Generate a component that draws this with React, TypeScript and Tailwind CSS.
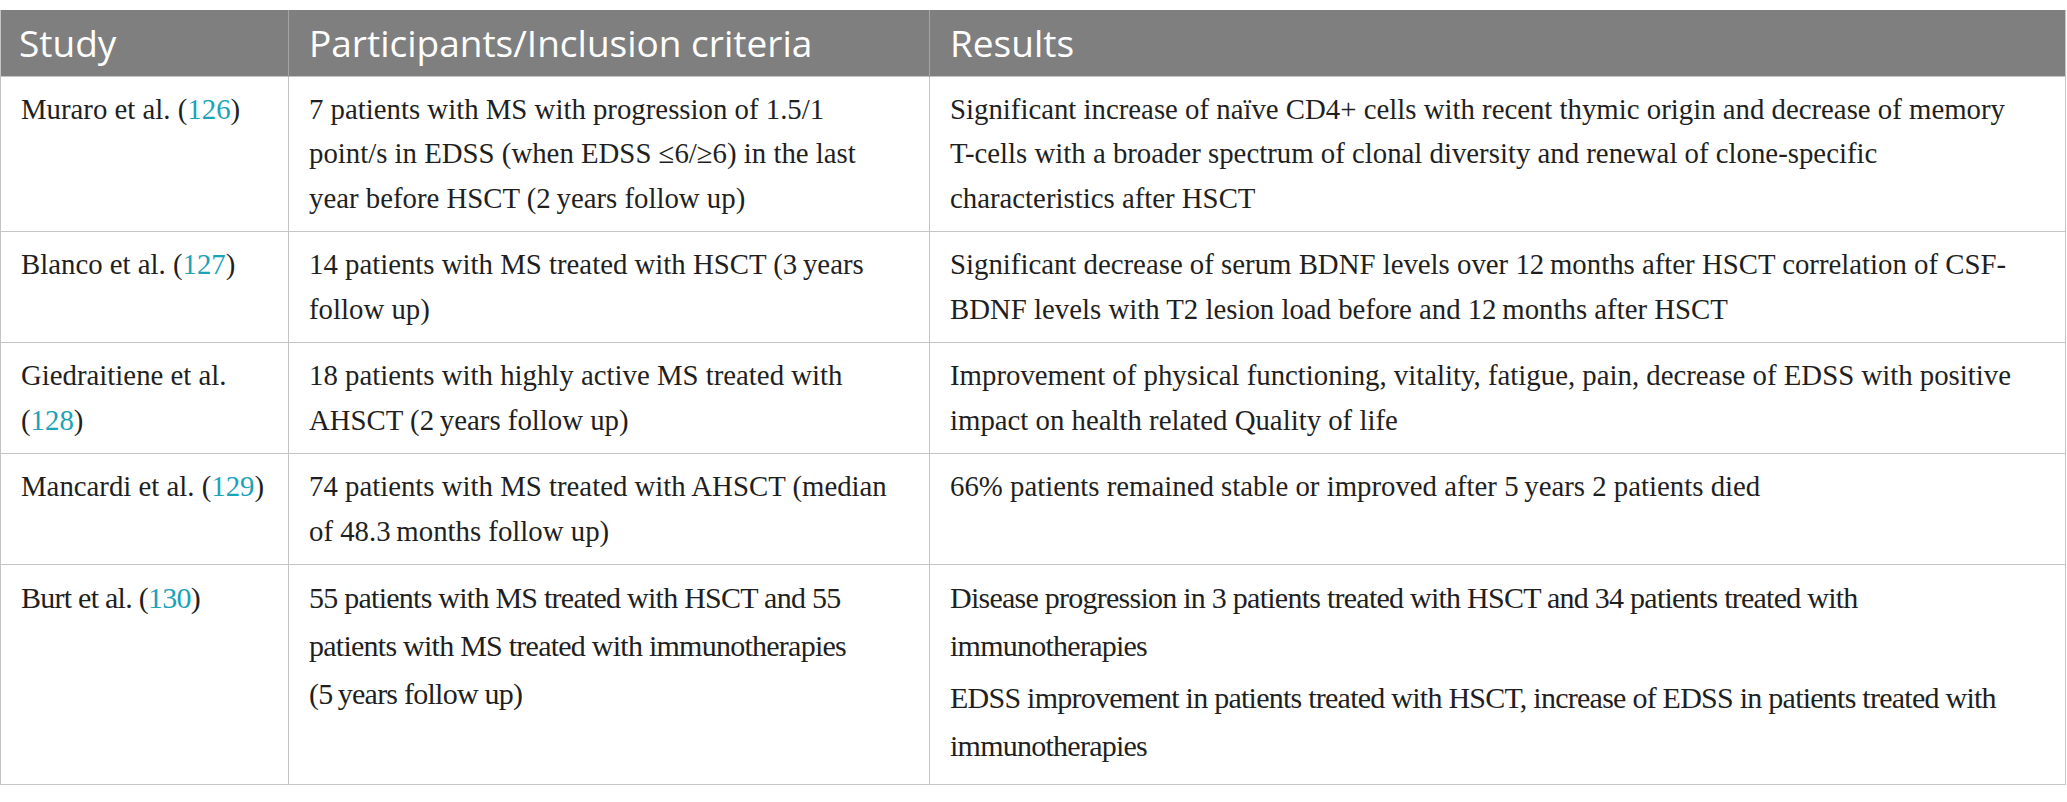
import type { ReactNode } from 'react';

type Row = {
  study: ReactNode[];
  participants: string[];
  results: string[][];
  narrow?: boolean;
};

const Ref = ({ n }: { n: string }) => (
  <>
    (<span className="text-[#1ba3b8]">{n}</span>)
  </>
);

// line breaks are taken from the reference so wrapping stays the same
const rows: Row[] = [
  {
    study: [<>Muraro et al. <Ref n="126" /></>],
    participants: [
      '7 patients with MS with progression of 1.5/1',
      'point/s in EDSS (when EDSS ≤6/≥6) in the last',
      'year before HSCT (2\u2009years follow up)',
    ],
    results: [
      [
        'Significant increase of naïve CD4+ cells with recent thymic origin and decrease of memory',
        'T-cells with a broader spectrum of clonal diversity and renewal of clone-specific',
        'characteristics after HSCT',
      ],
    ],
  },
  {
    study: [<>Blanco et al. <Ref n="127" /></>],
    participants: ['14 patients with MS treated with HSCT (3\u2009years', 'follow up)'],
    results: [
      [
        'Significant decrease of serum BDNF levels over 12\u2009months after HSCT correlation of CSF-',
        'BDNF levels with T2 lesion load before and 12\u2009months after HSCT',
      ],
    ],
  },
  {
    study: ['Giedraitiene et al.', <Ref n="128" />],
    participants: ['18 patients with highly active MS treated with', 'AHSCT (2\u2009years follow up)'],
    results: [
      [
        'Improvement of physical functioning, vitality, fatigue, pain, decrease of EDSS with positive',
        'impact on health related Quality of life',
      ],
    ],
  },
  {
    study: [<>Mancardi et al. <Ref n="129" /></>],
    participants: ['74 patients with MS treated with AHSCT (median', 'of 48.3\u2009months follow up)'],
    results: [['66% patients remained stable or improved after 5\u2009years 2 patients died']],
  },
  {
    study: [<>Burt et al. <Ref n="130" /></>],
    narrow: true,
    participants: [
      '55 patients with MS treated with HSCT and 55',
      'patients with MS treated with immunotherapies',
      '(5\u2009years follow up)',
    ],
    results: [
      ['Disease progression in 3 patients treated with HSCT and 34 patients treated with', 'immunotherapies'],
      [
        'EDSS improvement in patients treated with HSCT, increase of EDSS in patients treated with',
        'immunotherapies',
      ],
    ],
  },
];

const Lines = ({ lines }: { lines: ReactNode[] }) => (
  <>
    {lines.map((l, i) => (
      <div key={i} className="whitespace-nowrap">
        {l}
      </div>
    ))}
  </>
);

const App = () => {
  return (
    <div className="min-h-[802px] w-[2067px] bg-white pt-[10px]">
      <table className="w-[2066px] table-fixed border-collapse">
        <colgroup>
          <col className="w-[288px]" />
          <col className="w-[641px]" />
          <col />
        </colgroup>
        <thead>
          <tr className="h-[66px] bg-[#7f7f7f] font-['Open_Sans',sans-serif] text-[37px] leading-[44px] text-white">
            <th className="border-l border-[#c4c4c4] px-[18px] text-left font-normal">Study</th>
            <th className="border-l border-[#a3a3a3] px-[20px] text-left font-normal">
              Participants/Inclusion criteria
            </th>
            <th className="border-x border-l-[#a3a3a3] border-r-[#c4c4c4] px-[20px] text-left font-normal">
              Results
            </th>
          </tr>
        </thead>
        <tbody className="font-['Liberation_Serif',serif] text-[28.8px] text-[#1f1f1f]">
          {rows.map((r, idx) => {
            const cell = r.narrow
              ? 'border border-[#c4c4c4] pl-[20px] pr-[4px] pt-[9px] pb-[14px] align-top leading-[48px] tracking-[-0.025em] text-[30px]'
              : 'border border-[#c4c4c4] pl-[20px] pr-[4px] pt-[10px] pb-[11px] align-top leading-[44.5px]';
            return (
              <tr key={idx}>
                <td className={cell}>
                  <Lines lines={r.study} />
                </td>
                <td className={cell}>
                  <Lines lines={r.participants} />
                </td>
                <td className={cell}>
                  {r.results.map((p, i) => (
                    <div key={i} className={i > 0 ? 'mt-[4px]' : ''}>
                      <Lines lines={p} />
                    </div>
                  ))}
                </td>
              </tr>
            );
          })}
        </tbody>
      </table>
    </div>
  );
};

export default App;
